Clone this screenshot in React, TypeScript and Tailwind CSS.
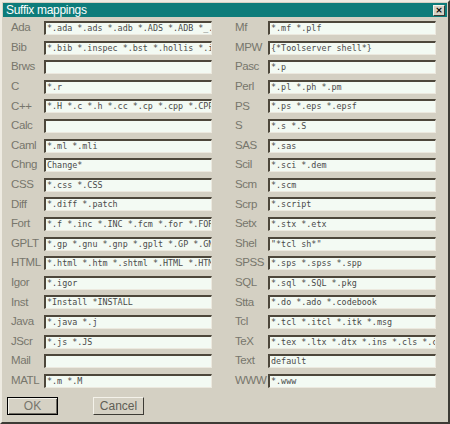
import React from 'react';

type Mapping = { label: string; value: string };

const leftColumn: Mapping[] = [
  { label: 'Ada', value: '*.ada *.ads *.adb *.ADS *.ADB *_.ADA' },
  { label: 'Bib', value: '*.bib *.inspec *.bst *.hollis *.isi' },
  { label: 'Brws', value: '' },
  { label: 'C', value: '*.r' },
  { label: 'C++', value: '*.H *.c *.h *.cc *.cp *.cpp *.CPP' },
  { label: 'Calc', value: '' },
  { label: 'Caml', value: '*.ml *.mli' },
  { label: 'Chng', value: 'Change*' },
  { label: 'CSS', value: '*.css *.CSS' },
  { label: 'Diff', value: '*.diff *.patch' },
  { label: 'Fort', value: '*.f *.inc *.INC *.fcm *.for *.FOR' },
  { label: 'GPLT', value: '*.gp *.gnu *.gnp *.gplt *.GP *.GNU' },
  { label: 'HTML', value: '*.html *.htm *.shtml *.HTML *.HTM' },
  { label: 'Igor', value: '*.igor' },
  { label: 'Inst', value: '*Install *INSTALL' },
  { label: 'Java', value: '*.java *.j' },
  { label: 'JScr', value: '*.js *.JS' },
  { label: 'Mail', value: '' },
  { label: 'MATL', value: '*.m *.M' },
];

const rightColumn: Mapping[] = [
  { label: 'Mf', value: '*.mf *.plf' },
  { label: 'MPW', value: '{*Toolserver shell*}' },
  { label: 'Pasc', value: '*.p' },
  { label: 'Perl', value: '*.pl *.ph *.pm' },
  { label: 'PS', value: '*.ps *.eps *.epsf' },
  { label: 'S', value: '*.s *.S' },
  { label: 'SAS', value: '*.sas' },
  { label: 'Scil', value: '*.sci *.dem' },
  { label: 'Scm', value: '*.scm' },
  { label: 'Scrp', value: '*.script' },
  { label: 'Setx', value: '*.stx *.etx' },
  { label: 'Shel', value: '"*tcl sh*"' },
  { label: 'SPSS', value: '*.sps *.spss *.spp' },
  { label: 'SQL', value: '*.sql *.SQL *.pkg' },
  { label: 'Stta', value: '*.do *.ado *.codebook' },
  { label: 'Tcl', value: '*.tcl *.itcl *.itk *.msg' },
  { label: 'TeX', value: '*.tex *.ltx *.dtx *.ins *.cls *.clo' },
  { label: 'Text', value: 'default' },
  { label: 'WWW', value: '*.www' },
];

const Row: React.FC<{ item: Mapping }> = ({ item }) => (
  <div className="flex items-center h-[14px]">
    <span className="w-[36px] pl-[3px] text-[11.5px] leading-none text-[#77766c] font-['Liberation_Sans',sans-serif] tracking-[-0.4px] whitespace-nowrap">
      {item.label}
    </span>
    <div className="w-[168px] h-[14px] bg-[#f3faf3] border-t-2 border-l-2 border-t-[#4d473b] border-l-[#4d473b] border-b border-r border-b-[#ece9df] border-r-[#ece9df] overflow-hidden whitespace-nowrap pl-[1px] text-[8.4px] leading-[11px] text-[#4a4a4a] font-['DejaVu_Sans_Mono',monospace]">
      {item.value}
    </div>
  </div>
);

const Column: React.FC<{ items: Mapping[] }> = ({ items }) => (
  <div className="flex flex-col gap-[5.6px]">
    {items.map((item) => (
      <Row key={item.label} item={item} />
    ))}
  </div>
);

export default function App() {
  return (
    <div className="w-[450px] h-[424px] bg-[#d4d0c3] border-t-2 border-l-2 border-t-[#eeebe2] border-l-[#eeebe2] border-b-2 border-r-2 border-b-[#3d3b35] border-r-[#3d3b35] flex flex-col bg-[radial-gradient(circle,#dcd9cd_0.5px,transparent_0.7px)] bg-[length:4px_4px]">
      <div className="mx-[1px] mt-[1px] h-[14px] bg-[#0d7c7a] flex items-center justify-between pl-[3px] pr-[2px]">
        <span className="text-white text-[12px] leading-none font-['Liberation_Sans',sans-serif] tracking-[-0.3px]">
          Suffix mappings
        </span>
        <div className="w-[12px] h-[11px] bg-[#d5d1c4] border border-t-[#f4f2ea] border-l-[#f4f2ea] border-b-[#3d3b35] border-r-[#3d3b35] flex items-center justify-center text-[9px] leading-none font-bold text-black font-['DejaVu_Sans',sans-serif]">
          ×
        </div>
      </div>
      <div className="flex gap-[20px] pl-[6px] pt-[4px]">
        <Column items={leftColumn} />
        <Column items={rightColumn} />
      </div>
      <div className="flex gap-[35px] pl-[5px] pt-[9.6px]">
        <button className="w-[51px] h-[18px] bg-[#d5d1c4] border border-black shadow-[inset_1px_1px_0_#f4f2ea,inset_-1px_-1px_0_#6f6c63] text-[12px] leading-none text-[#77766c] font-['Liberation_Sans',sans-serif]">
          OK
        </button>
        <button className="w-[51px] h-[18px] bg-[#d5d1c4] border border-t-[#f4f2ea] border-l-[#f4f2ea] border-b-[#3d3b35] border-r-[#3d3b35] text-[12px] leading-none text-[#5f5e55] font-['Liberation_Sans',sans-serif]">
          Cancel
        </button>
      </div>
    </div>
  );
}
